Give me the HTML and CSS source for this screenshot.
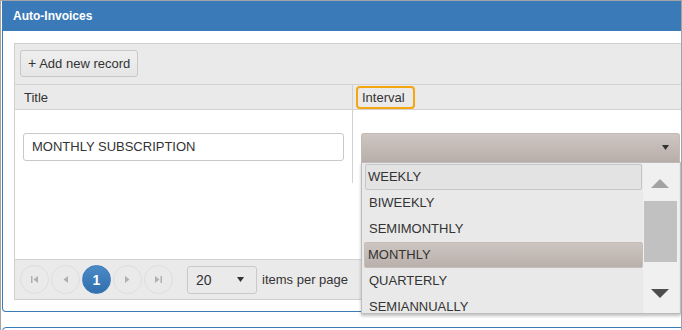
FILE: index.html
```html
<!DOCTYPE html>
<html>
<head>
<meta charset="utf-8">
<link rel="stylesheet" href="styles.css">
</head>
<body>
<div class="frame">
  <div class="panel">
    <div class="panel-heading">Auto-Invoices</div>
    <div class="panel-body">
      <div class="grid">
        <div class="toolbar">
          <button class="btn-add"><span class="plus">+</span> Add new record</button>
        </div>
        <div class="grid-head">
          <div class="th th-title">Title</div>
          <div class="th th-interval"><span class="focus-box">Interval</span></div>
        </div>
        <div class="grid-content">
          <div class="row">
            <div class="td td-title"><div class="text-input">MONTHLY SUBSCRIPTION</div></div>
            <div class="td td-interval">
              <div class="select">
                <svg class="caret" width="7" height="5" viewBox="0 0 7 5"><path d="M0 0H7L3.5 5Z" fill="#333"/></svg>
              </div>
              <div class="popup">
                <ul class="options">
                  <li class="opt focused">WEEKLY</li>
                  <li class="opt">BIWEEKLY</li>
                  <li class="opt">SEMIMONTHLY</li>
                  <li class="opt selected">MONTHLY</li>
                  <li class="opt">QUARTERLY</li>
                  <li class="opt">SEMIANNUALLY</li>
                </ul>
                <div class="scrollbar">
                  <svg class="sb-up" width="18" height="9" viewBox="0 0 18 9"><path d="M0 9L9 0L18 9Z" fill="#a3a3a3"/></svg>
                  <div class="sb-thumb"></div>
                  <svg class="sb-down" width="18" height="9" viewBox="0 0 18 9"><path d="M0 0H18L9 9Z" fill="#4d4d4d"/></svg>
                </div>
              </div>
            </div>
          </div>
        </div>
        <div class="pager">
          <span class="pg"><svg width="7" height="7" viewBox="0 0 7 7"><path d="M0 0H1.5V7H0Z M7 0V7L2.5 3.5Z" fill="#b0b0b0"/></svg></span>
          <span class="pg"><svg width="5" height="7" viewBox="0 0 5 7"><path d="M5 0V7L0.5 3.5Z" fill="#b0b0b0"/></svg></span>
          <span class="pg current">1</span>
          <span class="pg"><svg width="5" height="7" viewBox="0 0 5 7"><path d="M0 0V7L4.5 3.5Z" fill="#b0b0b0"/></svg></span>
          <span class="pg"><svg width="7" height="7" viewBox="0 0 7 7"><path d="M0 0V7L4.5 3.5Z M5.5 0H7V7H5.5Z" fill="#b0b0b0"/></svg></span>
          <div class="page-size">
            <span>20</span>
            <svg width="7" height="5" viewBox="0 0 7 5"><path d="M0 0H7L3.5 5Z" fill="#333"/></svg>
          </div>
          <span class="pager-label">items per page</span>
        </div>
      </div>
    </div>
  </div>
  <div class="panel next"></div>
</div>
</body>
</html>
```
FILE: styles.css
```css
* { box-sizing: border-box; }
html, body { margin: 0; padding: 0; background: #fff; }
body { font-family: "Liberation Sans", Arial, sans-serif; color: #333; }

.frame {
  width: 682px;
  height: 330px;
  border-top: 1px solid #a3a3a3;
  border-left: 1px solid #a3a3a3;
  border-right: 1px solid #a3a3a3;
  padding-left: 1px;
  overflow: hidden;
}

.panel {
  width: 730px;
  border: 1px solid #3a7bb7;
  border-top: 0;
  border-radius: 0 0 4px 4px;
}
.panel.next {
  margin-top: 15px;
  height: 20px;
  border-top: 1px solid #3a7bb7;
  border-radius: 4px 4px 0 0;
}

.panel-heading {
  height: 30px;
  background: #3a7ab8;
  color: #fff;
  font-weight: bold;
  font-size: 12px;
  line-height: 30px;
  padding-left: 11px;
  margin: 0 -1px;
}

.panel-body {
  padding: 12px 0 11px 11px;
}

.grid {
  border: 1px solid #cfcfcf;
  border-right: 0;
  width: 716px;
}

.toolbar {
  height: 40px;
  background: #ebeaea;
  padding: 6px 0 0 5px;
}
.btn-add {
  height: 27px;
  padding: 0 7px;
  font-family: inherit;
  font-size: 13px;
  color: #333;
  border: 1px solid #c8c8c8;
  border-radius: 3px;
  background: linear-gradient(#efefef, #e6e6e6);
  display: flex;
  align-items: center;
  gap: 3px;
}
.plus { font-size: 14px; line-height: 1; margin-top: -2px; }

.grid-head {
  display: flex;
  height: 26px;
  background: #ebeaea;
  border-top: 1px solid #d2d2d2;
  border-bottom: 1px solid #d2d2d2;
  font-size: 13px;
}
.th { display: flex; align-items: center; }
.th-title { width: 337px; padding-left: 9px; }
.th-interval {
  flex: 1;
  border-left: 1px solid #d2d2d2;
  padding-left: 3px;
}
.focus-box {
  display: block;
  height: 23px;
  line-height: 19px;
  padding: 0 8px 0 4px;
  border: 2px solid #f4a70f;
  border-radius: 4px;
  margin-top: 1px;
}

.grid-content {
  height: 149px;
  background: #fff;
}
.row { display: flex; height: 73px; }
.td { display: flex; align-items: center; }
.td-title { width: 337px; padding: 0 8px; }
.td-interval {
  flex: 1;
  border-left: 1px solid #d2d2d2;
  padding-left: 8px;
  position: relative;
}

.text-input {
  width: 100%;
  height: 28px;
  border: 1px solid #c9c9c9;
  border-radius: 3px;
  font-size: 13px;
  line-height: 26px;
  padding-left: 8px;
  color: #333;
}

.select {
  width: 319px;
  height: 29px;
  background: linear-gradient(#cec6c2, #b8aea9);
  border: 1px solid #c4bbb6;
  border-bottom: 0;
  border-radius: 3px 3px 0 0;
  position: relative;
  margin-top: 1px;
}
.caret { position: absolute; right: 10px; top: 11px; }

.popup {
  position: absolute;
  left: 8px;
  top: 52px;
  width: 320px;
  height: 152px;
  background: #e9e9e9;
  border: 1px solid #bdbdbd;
  box-shadow: 0 2px 3px rgba(0,0,0,0.25);
  display: flex;
  overflow: hidden;
  z-index: 2;
}
.options {
  list-style: none;
  margin: 0;
  padding: 1px 0 0 2px;
  width: 281px;
}
.opt {
  height: 26px;
  margin: 0;
  line-height: 24px;
  font-size: 13px;
  padding-left: 4px;
  color: #333;
  border: 1px solid transparent;
  border-radius: 2px;
}
.opt.focused {
  border-color: #c6c6c6;
  background: #e3e3e3;
  margin-left: 1px;
  margin-right: 1px;
  padding-left: 2px;
}
.opt.selected {
  background: linear-gradient(#cdc5c1, #bab0ab);
  border-color: #c6beba;
  padding-left: 3px;
}

.scrollbar {
  width: 36px;
  background: #f0f0f0;
  position: relative;
}
.sb-up { position: absolute; left: 8px; top: 16px; }
.sb-thumb {
  position: absolute;
  left: 1px;
  width: 33px;
  top: 38px;
  height: 61px;
  background: #c1c1c1;
}
.sb-down { position: absolute; left: 8px; top: 126px; }

.pager {
  height: 40px;
  background: #ebeaea;
  border-top: 1px solid #d2d2d2;
  display: flex;
  align-items: center;
  padding-left: 5px;
  font-size: 13px;
}
.pg {
  width: 29px;
  height: 29px;
  border-radius: 50%;
  border: 1px solid #dedede;
  margin-right: 2px;
  display: flex;
  align-items: center;
  justify-content: center;
}
.pg.current {
  background: linear-gradient(#4a8ac6, #2f6fae);
  border-color: #3a7bb7;
  color: #fff;
  font-weight: bold;
  font-size: 14px;
}
.page-size {
  margin-left: 12px;
  width: 70px;
  height: 28px;
  border: 1px solid #c9c9c9;
  border-radius: 3px;
  background: #ebeaea;
  display: flex;
  align-items: center;
  justify-content: space-between;
  padding: 0 12px 0 8px;
  font-size: 14px;
  color: #333;
}
.pager-label { margin-left: 5px; color: #333; font-size: 13px; }
```
